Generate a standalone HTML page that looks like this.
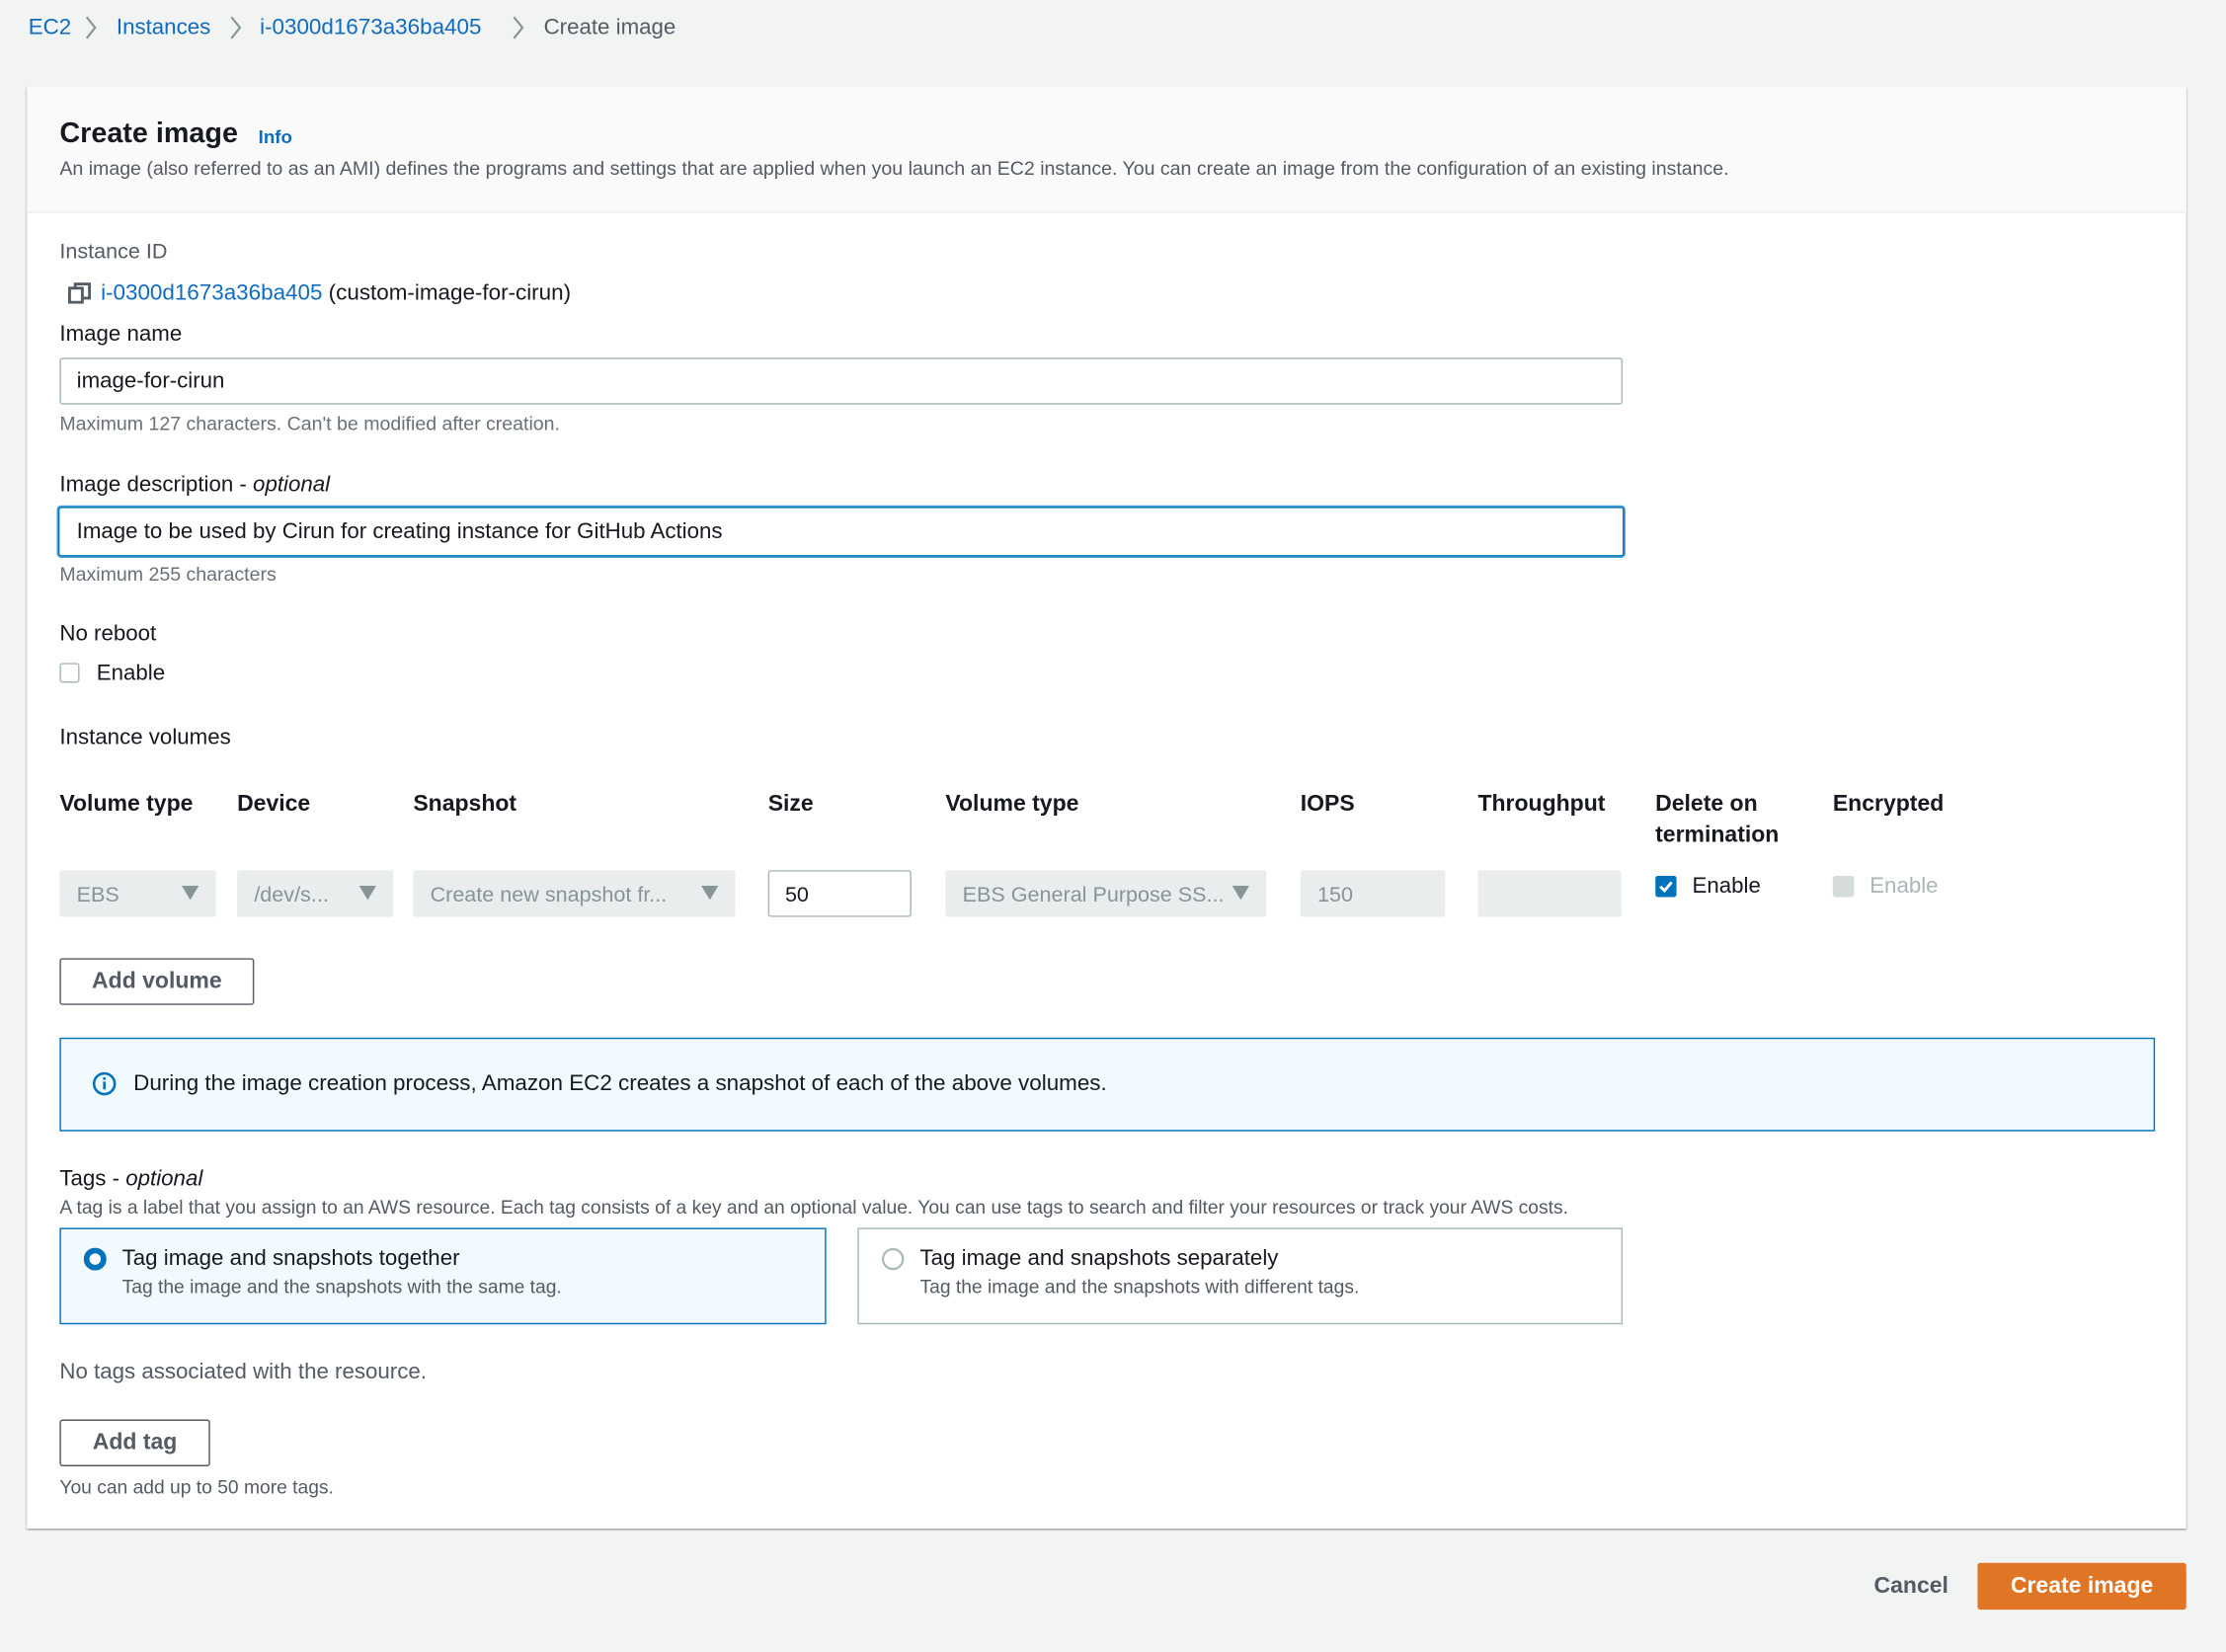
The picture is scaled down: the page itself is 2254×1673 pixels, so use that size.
<!DOCTYPE html>
<html><head><meta charset="utf-8"><style>
html,body{margin:0;padding:0;background:#f2f3f3;overflow:hidden}
#w{position:absolute;left:0;top:0;width:1568px;height:1164px;transform:scale(1.4375);transform-origin:0 0;font-family:"Liberation Sans",sans-serif;color:#16191f}
.a{position:absolute;white-space:nowrap;line-height:1}
.blue{color:#0f6bbf}
.g{color:#687078}
.panel{position:absolute;left:19px;top:61px;width:1521px;height:1016px;background:#fff;box-shadow:0 1px 1px rgba(0,28,36,.3),1px 1px 1px rgba(0,28,36,.15),-1px 1px 1px rgba(0,28,36,.15)}
.hdr{position:absolute;left:0;top:0;width:1521px;height:88px;background:#fafafa;border-bottom:1px solid #eaeded}
.inp{position:absolute;border:1px solid #aab7b8;border-radius:2px;background:#fff;box-sizing:border-box}
.sel{position:absolute;top:613px;height:33px;background:#eaeded;border-radius:2px;color:#879596;font-size:15px;box-sizing:border-box;padding:9px 12px;white-space:nowrap;overflow:hidden}
.sel .ar{position:absolute;right:12px;top:11px;width:0;height:0;border-left:6px solid transparent;border-right:6px solid transparent;border-top:10px solid #879596}
.th{position:absolute;top:556px;font-size:16px;font-weight:bold;line-height:22px}
.btn{position:absolute;border:1px solid #545b64;border-radius:2px;box-sizing:border-box;font-weight:bold;font-size:16px;color:#545b64;text-align:center;background:#fff}
.chev{position:absolute;top:11px}
</style></head><body><div id="w">
<div class="a blue" style="left:20px;top:12px;font-size:15.5px">EC2</div>
<svg class="chev" style="left:59px" width="10" height="17" viewBox="0 0 10 17"><path d="M2 1l6 7.5L2 16" fill="none" stroke="#879596" stroke-width="1.5"/></svg>
<div class="a blue" style="left:82px;top:12px;font-size:15.5px">Instances</div>
<svg class="chev" style="left:161px" width="10" height="17" viewBox="0 0 10 17"><path d="M2 1l6 7.5L2 16" fill="none" stroke="#879596" stroke-width="1.5"/></svg>
<div class="a blue" style="left:183px;top:12px;font-size:15.6px">i-0300d1673a36ba405</div>
<svg class="chev" style="left:360px" width="10" height="17" viewBox="0 0 10 17"><path d="M2 1l6 7.5L2 16" fill="none" stroke="#879596" stroke-width="1.5"/></svg>
<div class="a" style="left:383px;top:12px;font-size:15.5px;color:#545b64">Create image</div>

<div class="panel"><div class="hdr"></div></div>
<div class="a" style="left:42px;top:84px;font-size:20px;font-weight:bold">Create image</div>
<div class="a blue" style="left:182px;top:90px;font-size:13px;font-weight:bold">Info</div>
<div class="a" style="left:42px;top:112px;font-size:13.6px;color:#545b64">An image (also referred to as an AMI) defines the programs and settings that are applied when you launch an EC2 instance. You can create an image from the configuration of an existing instance.</div>

<div class="a" style="left:42px;top:170px;font-size:15px;color:#545b64">Instance ID</div>
<svg style="position:absolute;left:48px;top:199px" width="16" height="15" viewBox="0 0 16 15"><rect x="1" y="4" width="9" height="10" fill="none" stroke="#545b64" stroke-width="2"/><path d="M5 4V1h10v10h-5" fill="none" stroke="#545b64" stroke-width="2"/></svg>
<div class="a" style="left:71px;top:199px;font-size:15.6px"><span class="blue">i-0300d1673a36ba405</span> (custom-image-for-cirun)</div>

<div class="a" style="left:42px;top:228px;font-size:15.5px">Image name</div>
<div class="inp" style="left:42px;top:252px;width:1101px;height:33px"></div>
<div class="a" style="left:54px;top:261px;font-size:15.5px">image-for-cirun</div>
<div class="a g" style="left:42px;top:292px;font-size:13.6px">Maximum 127 characters. Can't be modified after creation.</div>

<div class="a" style="left:42px;top:334px;font-size:15.5px">Image description - <i>optional</i></div>
<div class="inp" style="left:41px;top:357px;width:1103px;height:35px;border:1px solid #0073bb;box-shadow:0 0 0 1px #4fa3d8"></div>
<div class="a" style="left:54px;top:367px;font-size:15.5px">Image to be used by Cirun for creating instance for GitHub Actions</div>
<div class="a g" style="left:42px;top:398px;font-size:13.6px">Maximum 255 characters</div>

<div class="a" style="left:42px;top:439px;font-size:15.5px">No reboot</div>
<div style="position:absolute;left:42px;top:467px;width:14px;height:14px;border:1px solid #aab7b8;border-radius:2px;box-sizing:border-box;background:#fff"></div>
<div class="a" style="left:68px;top:467px;font-size:15.5px">Enable</div>

<div class="a" style="left:42px;top:512px;font-size:15.5px">Instance volumes</div>
<div class="th" style="left:42px">Volume type</div>
<div class="th" style="left:167px">Device</div>
<div class="th" style="left:291px">Snapshot</div>
<div class="th" style="left:541px">Size</div>
<div class="th" style="left:666px">Volume type</div>
<div class="th" style="left:916px">IOPS</div>
<div class="th" style="left:1041px">Throughput</div>
<div class="th" style="left:1166px">Delete on<br>termination</div>
<div class="th" style="left:1291px">Encrypted</div>

<div class="sel" style="left:42px;width:110px">EBS<span class="ar"></span></div>
<div class="sel" style="left:167px;width:110px">/dev/s...<span class="ar"></span></div>
<div class="sel" style="left:291px;width:227px">Create new snapshot fr...<span class="ar"></span></div>
<div class="inp" style="left:541px;top:613px;width:101px;height:33px"></div>
<div class="a" style="left:553px;top:623px;font-size:15px">50</div>
<div class="sel" style="left:666px;width:226px">EBS General Purpose SS...<span class="ar"></span></div>
<div class="sel" style="left:916px;width:102px">150</div>
<div class="sel" style="left:1041px;width:101px"></div>
<svg style="position:absolute;left:1166px;top:617px" width="15" height="15" viewBox="0 0 15 15"><rect width="15" height="15" rx="2" fill="#0073bb"/><path d="M3.5 7.5l3 3 5-6" fill="none" stroke="#fff" stroke-width="2"/></svg>
<div class="a" style="left:1192px;top:617px;font-size:15.5px">Enable</div>
<div style="position:absolute;left:1291px;top:617px;width:15px;height:15px;border-radius:2px;background:#d5dbdb"></div>
<div class="a" style="left:1317px;top:617px;font-size:15.5px;color:#aab7b8">Enable</div>

<div class="btn" style="left:42px;top:675px;width:137px;height:33px;line-height:31px">Add volume</div>

<div style="position:absolute;left:42px;top:731px;width:1476px;height:66px;background:#f1faff;border:1px solid #0073bb;box-sizing:border-box"></div>
<svg style="position:absolute;left:65px;top:755px" width="17" height="17" viewBox="0 0 17 17"><circle cx="8.5" cy="8.5" r="7.3" fill="none" stroke="#0073bb" stroke-width="1.8"/><rect x="7.6" y="7" width="1.8" height="5.5" fill="#0073bb"/><rect x="7.6" y="4" width="1.8" height="1.8" fill="#0073bb"/></svg>
<div class="a" style="left:94px;top:756px;font-size:15.6px">During the image creation process, Amazon EC2 creates a snapshot of each of the above volumes.</div>

<div class="a" style="left:42px;top:823px;font-size:15.5px">Tags - <i>optional</i></div>
<div class="a" style="left:42px;top:844px;font-size:13.4px;color:#545b64">A tag is a label that you assign to an AWS resource. Each tag consists of a key and an optional value. You can use tags to search and filter your resources or track your AWS costs.</div>

<div style="position:absolute;left:42px;top:865px;width:540px;height:68px;background:#f1faff;border:1px solid #0073bb;box-sizing:border-box"></div>
<svg style="position:absolute;left:59px;top:879px" width="16" height="16" viewBox="0 0 16 16"><circle cx="8" cy="8" r="6" fill="#fff" stroke="#0073bb" stroke-width="4"/></svg>
<div class="a" style="left:86px;top:879px;font-size:15.5px">Tag image and snapshots together</div>
<div class="a" style="left:86px;top:900px;font-size:13.4px;color:#545b64">Tag the image and the snapshots with the same tag.</div>

<div style="position:absolute;left:604px;top:865px;width:539px;height:68px;background:#fff;border:1px solid #aab7b8;box-sizing:border-box"></div>
<svg style="position:absolute;left:621px;top:879px" width="16" height="16" viewBox="0 0 16 16"><circle cx="8" cy="8" r="7" fill="#fff" stroke="#aab7b8" stroke-width="1.5"/></svg>
<div class="a" style="left:648px;top:879px;font-size:15.5px">Tag image and snapshots separately</div>
<div class="a" style="left:648px;top:900px;font-size:13.4px;color:#545b64">Tag the image and the snapshots with different tags.</div>

<div class="a" style="left:42px;top:959px;font-size:15.5px;color:#545b64">No tags associated with the resource.</div>
<div class="btn" style="left:42px;top:1000px;width:106px;height:33px;line-height:31px">Add tag</div>
<div class="a" style="left:42px;top:1041px;font-size:13.4px;color:#545b64">You can add up to 50 more tags.</div>

<div class="a" style="left:1320px;top:1110px;font-size:16px;font-weight:bold;color:#545b64">Cancel</div>
<div style="position:absolute;left:1393px;top:1101px;width:147px;height:33px;background:#e07525;border-radius:2px;color:#fff;font-weight:bold;font-size:16px;text-align:center;line-height:33px">Create image</div>
</div></body></html>
